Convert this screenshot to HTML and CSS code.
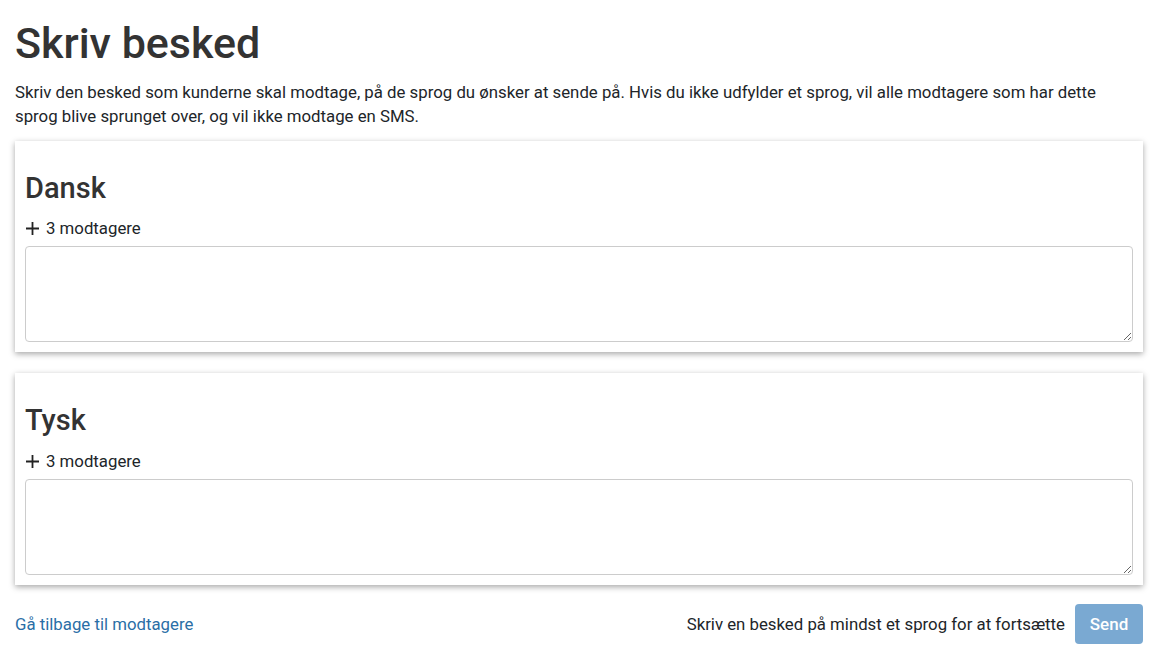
FILE: index.html
```html
<!DOCTYPE html>
<html lang="da">
<head>
  <meta charset="UTF-8" />
  <meta name="viewport" content="width=device-width, initial-scale=1.0" />
  <title>Skriv besked</title>
  <link rel="stylesheet" href="styles.css">
</head>
<body>
  <div class="page">
    <h1>Skriv besked</h1>
    <p class="intro">Skriv den besked som kunderne skal modtage, på de sprog du ønsker at sende på. Hvis du ikke udfylder et sprog, vil alle modtagere som har dette sprog blive sprunget over, og vil ikke modtage en SMS.</p>

    <div class="card">
      <h3>Dansk</h3>
      <div class="recipients">
        <svg class="plus" width="13" height="13" viewBox="0 0 13 13"><path d="M6.5 0v13M0 6.5h13" stroke="#222" stroke-width="1.8"/></svg>
        <span>3 modtagere</span>
      </div>
      <textarea class="message"></textarea>
    </div>

    <div class="card">
      <h3>Tysk</h3>
      <div class="recipients">
        <svg class="plus" width="13" height="13" viewBox="0 0 13 13"><path d="M6.5 0v13M0 6.5h13" stroke="#222" stroke-width="1.8"/></svg>
        <span>3 modtagere</span>
      </div>
      <textarea class="message"></textarea>
    </div>

    <div class="footer">
      <a href="#" class="back">Gå tilbage til modtagere</a>
      <div class="actions">
        <span class="hint">Skriv en besked på mindst et sprog for at fortsætte</span>
        <button class="send" disabled>Send</button>
      </div>
    </div>
  </div>
</body>
</html>
```

FILE: styles.css
```css
body {
  margin: 0;
  font-family: Roboto, "Liberation Sans", sans-serif;
  font-size: 16.8px;
  line-height: 24px;
  color: #212529;
  background: #fff;
}
.page {
  padding: 0 13px 0 15px;
}
h1 {
  margin: 0;
  padding-top: 18px;
  font-size: 43px;
  font-weight: 500;
  line-height: 1.2;
  color: #333;
}
.intro {
  max-width: 1100px;
  margin: 10px 0 13px;
}
.card {
  background: #fff;
  padding: 10px;
  margin-bottom: 21px;
  box-shadow: 0 2px 6px rgba(0, 0, 0, 0.35);
}
.card h3 {
  margin: 20px 0 11px;
  font-size: 29px;
  font-weight: 500;
  line-height: 1.2;
  color: #333;
}
.recipients {
  display: flex;
  align-items: center;
  gap: 7px;
  padding-left: 1px;
  margin-bottom: 6px;
}
.message {
  display: block;
  box-sizing: border-box;
  width: 100%;
  height: 96px;
  border: 1px solid #ccc;
  border-radius: 4px;
  font-family: inherit;
  font-size: 16px;
}
.footer {
  display: flex;
  justify-content: space-between;
  align-items: center;
  margin-top: -2px;
}
.back {
  color: #2a6ea6;
  text-decoration: none;
}
.actions {
  display: flex;
  align-items: center;
  gap: 10px;
}
.send {
  background: #7aa9d2;
  color: #fff;
  border: none;
  border-radius: 4px;
  width: 68px;
  height: 40px;
  font-family: inherit;
  font-size: 17px;
  font-weight: 500;
}
```
